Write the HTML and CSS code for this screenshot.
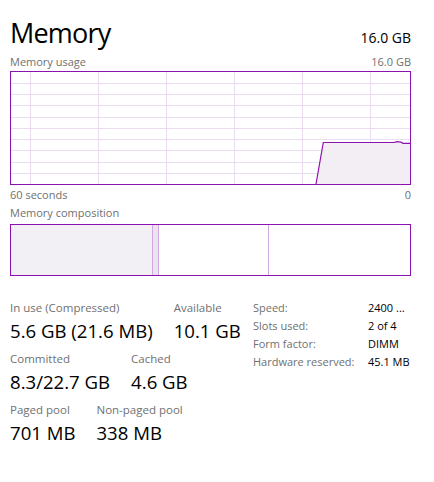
FILE: index.html
```html
<!DOCTYPE html>
<html>
<head>
<meta charset="utf-8">
<link rel="stylesheet" href="styles.css">
</head>
<body>
<div class="page">
  <div class="header">
    <div class="title">Memory</div>
    <div class="total">16.0 GB</div>
  </div>
  <div class="caption-row top-cap">
    <span>Memory usage</span><span>16.0 GB</span>
  </div>
  <svg class="graph" width="401" height="114" viewBox="0 0 401 114">
    <g stroke="#ecdcf1" stroke-width="1">
      <line x1="20.5" y1="1" x2="20.5" y2="113"/>
      <line x1="88.5" y1="1" x2="88.5" y2="113"/>
      <line x1="156.5" y1="1" x2="156.5" y2="113"/>
      <line x1="224.5" y1="1" x2="224.5" y2="113"/>
      <line x1="292.5" y1="1" x2="292.5" y2="113"/>
      <line x1="360.5" y1="1" x2="360.5" y2="113"/>
      <line x1="1" y1="12.5" x2="400" y2="12.5"/>
      <line x1="1" y1="23.5" x2="400" y2="23.5"/>
      <line x1="1" y1="34.5" x2="400" y2="34.5"/>
      <line x1="1" y1="46.5" x2="400" y2="46.5"/>
      <line x1="1" y1="57.5" x2="400" y2="57.5"/>
      <line x1="1" y1="68.5" x2="400" y2="68.5"/>
      <line x1="1" y1="79.5" x2="400" y2="79.5"/>
      <line x1="1" y1="91.5" x2="400" y2="91.5"/>
      <line x1="1" y1="102.5" x2="400" y2="102.5"/>
    </g>
    <polygon points="306,113 313.3,71.5 384,71.5 387,70.7 391,71.2 393,72.3 400,72.3 400,113" fill="#f1edf3" fill-opacity="0.92"/>
    <polyline points="306,113 313.3,71.5 384,71.5 387,70.7 391,71.2 393,72.3 400,72.3" fill="none" stroke="#8b12ae" stroke-width="1.2"/>
    <rect x="0.5" y="0.5" width="400" height="113" fill="none" stroke="#8b12ae" stroke-width="1"/>
  </svg>
  <div class="caption-row bottom-cap">
    <span>60 seconds</span><span>0</span>
  </div>
  <div class="caption-row comp-cap">
    <span>Memory composition</span>
  </div>
  <svg class="comp" width="401" height="52" viewBox="0 0 401 52">
    <rect x="1" y="1" width="141.5" height="50" fill="#f3f0f5"/>
    <rect x="142.5" y="1" width="6" height="50" fill="#ece3f0"/>
    <g stroke="#d1a9e0" stroke-width="1">
      <line x1="142.5" y1="1" x2="142.5" y2="51"/>
      <line x1="148.5" y1="1" x2="148.5" y2="51"/>
      <line x1="258.5" y1="1" x2="258.5" y2="51"/>
    </g>
    <rect x="0.5" y="0.5" width="400" height="51" fill="none" stroke="#8b12ae" stroke-width="1"/>
  </svg>
  <div class="details">
    <div class="stats">
      <div class="stat-row">
        <div class="stat"><div class="label">In use (Compressed)</div><div class="value">5.6 GB (21.6 MB)</div></div>
        <div class="stat"><div class="label">Available</div><div class="value">10.1 GB</div></div>
      </div>
      <div class="stat-row">
        <div class="stat"><div class="label">Committed</div><div class="value">8.3/22.7 GB</div></div>
        <div class="stat"><div class="label">Cached</div><div class="value">4.6 GB</div></div>
      </div>
      <div class="stat-row">
        <div class="stat"><div class="label">Paged pool</div><div class="value">701 MB</div></div>
        <div class="stat"><div class="label">Non-paged pool</div><div class="value">338 MB</div></div>
      </div>
    </div>
    <div class="props">
      <div class="prop"><span class="pk">Speed:</span><span class="pv">2400 ...</span></div>
      <div class="prop"><span class="pk">Slots used:</span><span class="pv">2 of 4</span></div>
      <div class="prop"><span class="pk">Form factor:</span><span class="pv">DIMM</span></div>
      <div class="prop"><span class="pk">Hardware reserved:</span><span class="pv">45.1 MB</span></div>
    </div>
  </div>
</div>
</body>
</html>
```
FILE: styles.css
```css
html, body {
  margin: 0;
  padding: 0;
  background: #ffffff;
}
body {
  font-family: "Open Sans", "Noto Sans", sans-serif;
  color: #000;
}
.page {
  width: 401px;
  padding: 14px 0 0 10px;
  display: flex;
  flex-direction: column;
}
.header {
  display: flex;
  justify-content: space-between;
  align-items: baseline;
  height: 40px;
}
.title {
  font-size: 27px;
  line-height: 38px;
  letter-spacing: -0.8px;
}
.total {
  font-size: 14px;
  line-height: 20px;
}
.caption-row {
  display: flex;
  justify-content: space-between;
  font-size: 11px;
  line-height: 16px;
  color: #707070;
}
.top-cap {
  height: 17px;
}
.graph, .comp {
  display: block;
}
.bottom-cap {
  margin-top: 2px;
}
.comp-cap {
  margin-top: 2px;
  height: 19px;
}
.details {
  display: flex;
  margin-top: 23px;
}
.stats {
  width: 243px;
  display: flex;
  flex-direction: column;
  gap: 4px;
}
.stat-row {
  display: flex;
  gap: 21px;
}
.label {
  font-size: 11.5px;
  line-height: 17px;
  color: #707070;
}
.value {
  font-size: 18.6px;
  line-height: 30px;
}
.props {
  display: flex;
  flex-direction: column;
  font-size: 11px;
}
.prop {
  display: flex;
  line-height: 18px;
}
.pk {
  width: 115px;
  color: #707070;
}
.pv {
  color: #000;
}
```
